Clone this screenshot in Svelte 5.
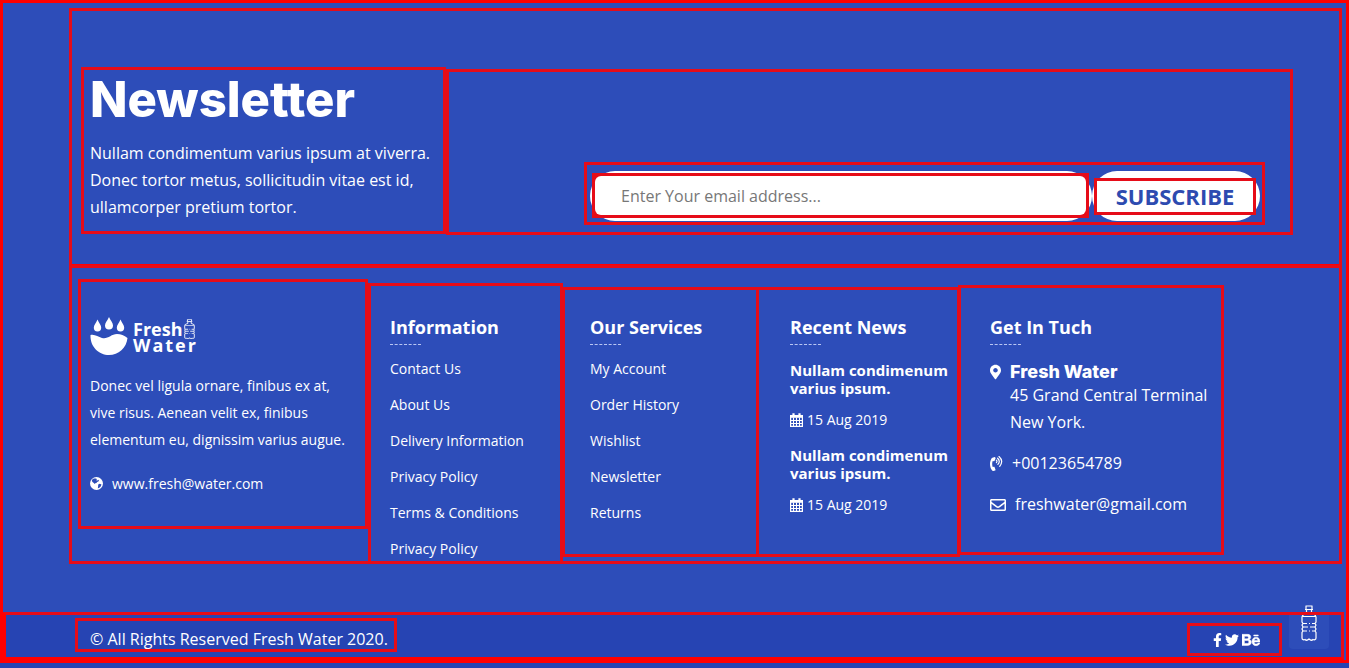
<script>
  const information = ['Contact Us', 'About Us', 'Delivery Information', 'Privacy Policy', 'Terms & Conditions', 'Privacy Policy'];
  const services = ['My Account', 'Order History', 'Wishlist', 'Newsletter', 'Returns'];
  const news = [
    { title: 'Nullam condimenum varius ipsum.', date: '15 Aug 2019' },
    { title: 'Nullam condimenum varius ipsum.', date: '15 Aug 2019' }
  ];
  let email = $state('');
</script>

{#snippet bottle(w, h, stroke)}
  <svg width={w} height={h} viewBox="0 0 16 36" preserveAspectRatio="none" fill="none" stroke="currentColor" stroke-width={stroke} aria-hidden="true">
    <path d="M4.500 1h7M5 1v3M11 1v3M4 4.500h8M5.500 4.500v3C4.500 9 1 9.500 1 12v5l1 1.500-1 1.500 1 2-1 2 1 2-1 1.500V33c0 2 2 2 3 1.500 1 1 2.500 1 4-.5 1.500 1.500 3 1.500 4 .5 1 .5 3 .5 3-1.500v-5.500l-1-1.500 1-2-1-2 1-2-1-1.500 1-1.500v-5c0-2.500-3.500-3-4.500-4.500v-3M1.500 11.500h13M2 18.500h4M8 18.500h1M11 18.500h3M2 22h5M9 22h5M2 26h4M8 26h1M11 26h3" />
  </svg>
{/snippet}

<footer class="page frame">
  <section class="newsletter frame">
    <div class="intro frame">
      <h2>Newsletter</h2>
      <p>Nullam condimentum varius ipsum at viverra. Donec tortor metus, sollicitudin vitae est id, ullamcorper pretium tortor.</p>
    </div>
    <div class="signup frame">
      <form class="frame" onsubmit={(e) => e.preventDefault()}>
        <div class="pill field">
          <div class="field-frame">
            <input type="email" aria-label="Email address" placeholder="Enter Your email address..." bind:value={email} />
          </div>
        </div>
        <button class="pill send" type="submit"><span class="frame">SUBSCRIBE</span></button>
      </form>
    </div>
  </section>

  <section class="columns frame">
    <div class="col about frame">
      <a class="logo" href="#home">
        <svg width="38" height="38" viewBox="0 0 38 38" fill="currentColor" aria-hidden="true">
          <path d="M7.500 2.500C9 6 11.200 8 11.200 10.800a3.700 3.700 0 0 1-7.400 0C3.800 8 6 6 7.500 2.500zM19 0c1.500 3.500 4 5.500 4 8.500a4 4 0 0 1-8 0C15 5.500 17.500 3.500 19 0zM30.500 2.500c1.500 3.500 3.700 5.500 3.700 8.300a3.700 3.700 0 0 1-7.400 0c0-2.800 2.200-4.800 3.700-8.300z" />
          <path d="M0.500 18C5 17 8 20 12 21c6 1.500 9-4 15-4 4 0 7 1.500 10.500 4C36.500 31 28.500 38 19 38 9 38 0 30 .5 18z" />
        </svg>
        <span class="words">
          <span class="fresh">Fresh{@render bottle(11, 20, 1.5)}</span>
          <span class="water">Water</span>
        </span>
      </a>
      <p>Donec vel ligula ornare, finibus ex at, vive risus. Aenean velit ex, finibus elementum eu, dignissim varius augue.</p>
      <a class="site" href="#site">
        <svg width="13" height="13" viewBox="0 0 13 13" aria-hidden="true">
          <circle cx="6.500" cy="6.500" r="6.500" fill="currentColor" />
          <path d="M2.500 2.300 4 1.400l2.200.1.800.9-.8.7.9.6 1-.9.900.5-.6 1.300-1.300.5-.7 1-1.200.1-.5.800-.9-1-1.300-.9-.7-1.400zM8.200 7.600l1.500-.8 1.800.6-.8 2-1.700 1.500-1.200.3.300-1.600z" fill="#2d4db9" />
        </svg>
        <span>www.fresh@water.com</span>
      </a>
    </div>

    <nav class="col info frame" aria-label="Information">
      <h3>Information</h3>
      <ul>
        {#each information as item}<li><a href="#info">{item}</a></li>{/each}
      </ul>
    </nav>

    <nav class="col services frame" aria-label="Our Services">
      <h3>Our Services</h3>
      <ul>
        {#each services as item}<li><a href="#services">{item}</a></li>{/each}
      </ul>
    </nav>

    <div class="col recent frame">
      <h3>Recent News</h3>
      {#each news as post}
        <article>
          <h4>{post.title}</h4>
          <div class="date">
            <svg width="13" height="14" viewBox="0 0 13 14" fill="none" stroke="currentColor" aria-hidden="true">
              <path d="M.6 2.500h11.800v10.900H.6z" stroke-width="1.200" />
              <path d="M0 3.500h13" stroke-width="2.600" />
              <path d="M3.500.2v3.600M9.500.2v3.600" stroke-width="2.200" />
              <path d="M3.500 4.500v9M6.500 4.500v9M9.500 4.500v9M0 7.500h13M0 10.500h13" stroke-width="1" />
            </svg>
            <time datetime="2019-08-15">{post.date}</time>
          </div>
        </article>
      {/each}
    </div>

    <div class="col contact frame">
      <h3>Get In Tuch</h3>
      <address>
        <div class="row place">
          <svg width="11" height="16" viewBox="0 0 384 512" fill="currentColor" aria-hidden="true"><path d="M172.268 501.670C26.970 291.031 0 269.413 0 192 0 85.961 85.961 0 192 0s192 85.961 192 192c0 77.413-26.970 99.031-172.268 309.670-9.535 13.774-29.930 13.773-39.464 0zM192 272c44.183 0 80-35.817 80-80s-35.817-80-80-80-80 35.817-80 80 35.817 80 80 80z" /></svg>
          <div>
            <strong>Fresh Water</strong>
            <span>45 Grand Central Terminal<br />New York.</span>
          </div>
        </div>
        <a class="row phone" href="tel:+00123654789">
          <svg width="13" height="16" viewBox="0 0 13 16" fill="none" stroke="currentColor" aria-hidden="true">
            <path d="M4.600.9 1.800 1.900C-.6 5.500-.6 10.500 1.800 14.100c.3.700.9 1.100 1.600 1l1.700-.5c.4-.1.600-.5.400-.9L4.600 11.200c-.1-.3-.4-.5-.7-.4l-1.200.2c-.7-2-.7-4 0-6l1.200.2c.3.100.6-.1.700-.4l1-2.500c.2-.4 0-.8-.4-.9z" fill="currentColor" stroke="none" />
            <path d="M6.400 4.200q1.200.9 0 2.400M7.600 2.200q3.200 3 .3 6.200M9 .5q5 4.500.7 9.800" stroke-width="1.200" stroke-linecap="round" />
          </svg>
          <span>+00123654789</span>
        </a>
        <a class="row" href="mailto:freshwater@gmail.com">
          <svg width="16" height="16" viewBox="0 0 512 512" fill="currentColor" aria-hidden="true"><path d="M464 64H48C21.490 64 0 85.490 0 112v288c0 26.510 21.490 48 48 48h416c26.510 0 48-21.490 48-48V112c0-26.510-21.490-48-48-48zm0 48v40.805c-22.422 18.259-58.168 46.651-134.587 106.490-16.841 13.247-50.201 45.072-73.413 44.701-23.208.375-56.579-31.459-73.413-44.701C106.180 199.465 70.425 171.067 48 152.805V112h416zM48 400V214.398c22.914 18.251 55.409 43.862 104.938 82.646 21.857 17.205 60.134 55.186 103.062 54.955 42.717.231 80.509-37.199 103.053-54.947 49.528-38.783 82.032-64.401 104.947-82.653V400H48z" /></svg>
          <span>freshwater@gmail.com</span>
        </a>
      </address>
    </div>
  </section>

  <div class="bar">
    <p class="frame">© All Rights Reserved Fresh Water 2020.</p>
    <div class="social frame">
      <a href="#facebook" aria-label="Facebook"><svg width="9" height="14" viewBox="0 0 320 512" fill="currentColor"><path d="M279.140 288l14.220-92.660h-88.910v-60.130c0-25.350 12.420-50.060 52.240-50.060h40.420V6.260S260.430 0 225.360 0c-73.220 0-121.080 44.380-121.080 124.720v70.620H22.890V288h81.390v224h100.170V288z" /></svg></a>
      <a href="#twitter" aria-label="Twitter"><svg width="14" height="14" viewBox="0 0 512 512" fill="currentColor"><path d="M459.370 151.716c.325 4.548.325 9.097.325 13.645 0 138.720-105.583 298.558-298.558 298.558-59.452 0-114.680-17.219-161.137-47.106 8.447.974 16.568 1.299 25.340 1.299 49.055 0 94.213-16.568 130.274-44.832-46.132-.975-84.792-31.188-98.112-72.772 6.498.974 12.995 1.624 19.818 1.624 9.421 0 18.843-1.300 27.614-3.573-48.081-9.747-84.143-51.980-84.143-102.985v-1.299c13.969 7.797 30.214 12.670 47.431 13.319-28.264-18.843-46.781-51.005-46.781-87.391 0-19.492 5.197-37.360 14.294-52.954 51.655 63.675 129.300 105.258 216.365 109.807-1.624-7.797-2.599-15.918-2.599-24.040 0-57.828 46.782-104.934 104.934-104.934 30.213 0 57.502 12.670 76.670 33.137 23.715-4.548 46.456-13.320 66.599-25.340-7.798 24.366-24.366 44.833-46.132 57.827 21.117-2.273 41.584-8.122 60.426-16.243-14.292 20.791-32.161 39.308-52.628 54.253z" /></svg></a>
      <a href="#behance" aria-label="Behance"><svg width="18" height="16" viewBox="0 0 576 512" fill="currentColor" stroke="currentColor" stroke-width="16"><path d="M232 237.200c31.800-15.200 48.400-38.200 48.400-74 0-70.600-52.600-87.800-113.300-87.800H0v354.400h171.800c64.400 0 124.900-30.900 124.900-102.900 0-44.500-21.100-77.400-64.700-89.700zM77.900 135.900H151c28.100 0 53.400 7.900 53.400 40.500 0 30.100-19.700 42.200-47.500 42.200h-79v-82.700zm83.300 233.700H77.900V272h84.900c34.300 0 56 14.300 56 50.600 0 35.800-25.900 47-57.600 47zm358.500-240.700H376V94h143.700v34.900zM576 305.200c0-75.900-44.400-139.200-124.900-139.200-78.200 0-131.300 58.800-131.300 135.800 0 79.900 50.300 134.700 131.300 134.700 61.300 0 101-27.600 120.100-86.300H509c-6.700 21.900-34.300 33.500-55.700 33.500-41.300 0-63-24.200-63-65.300h185.100c.3-4.200.6-8.700.6-13.200zM390.400 274c2.300-33.700 24.700-54.800 58.500-54.800 35.400 0 53.200 20.800 56.200 54.800H390.400z" /></svg></a>
    </div>
    <a class="top" href="#top" aria-label="Back to top">{@render bottle(16, 36, 1.2)}</a>
  </div>
</footer>

<style>
  :global(body) {
    background: #2644b1;
    color: #fff;
    font: 16px/27px "Open Sans", sans-serif;
  }
  .page, .page * { box-sizing: border-box; }
  .page p, .page h2, .page h3, .page h4, .page ul { margin: 0; padding: 0; }
  .page a { color: inherit; text-decoration: none; }
  svg { display: block; flex: none; }
  .frame { border: 3px solid #e60c18; }

  .page {
    background: #2d4db9;
    border-color: #f00;
    padding-top: 5px;
  }
  .newsletter, .columns {
    display: flex;
    align-items: flex-start;
    margin: 0 4px 0 66px;
  }
  .newsletter {
    padding: 56px 46px 30px 9px;
    border-bottom-color: #f00;
  }
  .intro { width: 365px; flex: none; padding: 0 6px 10px; }
  h2 {
    font: 800 49px/60px Inter, sans-serif;
    margin-bottom: 10px !important;
  }
  .signup {
    flex: 1;
    display: flex;
    align-self: stretch;
    align-items: flex-end;
    margin-top: 2px;
    margin-bottom: -1px;
    padding: 0 25px 7px 135px;
  }
  form { flex: 1; display: flex; padding: 6px 2px 1px 3px; }
  .pill { background: #fff; height: 50px; border: 0; border-radius: 25px; }
  .field { flex: 1; padding: 2px 3px 3px 2px; }
  .field-frame { height: 45px; padding: 3px; background: #e60c18; }
  input {
    display: block;
    width: 100%;
    height: 100%;
    border: 0;
    border-radius: 6px;
    padding: 0 26px;
    background: #fff;
    color: #333;
    font: inherit;
    outline: none;
  }
  input::placeholder { color: #777; opacity: 1; }
  .send { flex: none; padding: 0 4px 0 2px; cursor: pointer; }
  .send span {
    display: block;
    width: 162px;
    background: #fff;
    color: #2d4bb0;
    font: 700 22px/31px "Open Sans", sans-serif;
  }

  .columns {
    margin-top: -2px;
    padding: 11px 115px 0 6px;
  }
  .col { flex: none; font-size: 14px; }
  .about { width: 290px; height: 250px; padding: 35px 8px 0 9px; }
  .about p { margin-top: 17px; padding-right: 8px; }
  .info { width: 195px; margin: 4px 0 -3px; padding: 29px 0 2px 19px; }
  .services { width: 197px; height: 270px; margin: 8px 0 0 -1px; padding: 25px 0 0 25px; }
  .recent { width: 204px; height: 270px; margin: 8px 0 0 -3px; padding: 25px 2px 0 31px; }
  .contact { width: 266px; height: 270px; margin: 6px 0 0 -2px; padding: 27px 0 0 29px; }

  .logo { display: flex; gap: 5px; height: 38px; }
  .words { display: flex; flex-direction: column; padding-top: 4px; font: 700 18px/16px "Open Sans", sans-serif; }
  .fresh { display: flex; gap: 2px; height: 16px; }
  .fresh :global(svg) { opacity: .85; margin-top: -2px; }
  .water { letter-spacing: 2px; }
  .site { display: flex; align-items: center; gap: 9px; margin-top: 17px; }

  h3 { font: 700 18px/24px "Open Sans", sans-serif; }
  h3::after {
    content: "";
    display: block;
    width: 31px;
    margin-top: 5px;
    border-top: 1px dashed #b9c6f3;
  }
  ul { list-style: none; display: grid; gap: 16px; padding-top: 14px !important; line-height: 20px; }

  article { padding-top: 16px; }
  h4 { font: 700 15px/18px "Open Sans", sans-serif; }
  .date { display: flex; align-items: center; gap: 4px; margin-top: 13px; line-height: 20px; }

  address { font: 16px/27px "Open Sans", sans-serif; padding-top: 17px; display: grid; gap: 14px; }
  .row { display: flex; align-items: center; gap: 9px; }
  .place { align-items: flex-start; }
  .place svg { margin-top: 2px; }
  strong { display: block; font: 800 18px/20px Inter, sans-serif; }

  .bar {
    position: relative;
    display: flex;
    align-items: flex-start;
    justify-content: space-between;
    height: 48px;
    margin: 48px 2px 0 0;
    padding: 6px 62px 0 72px;
    background: #2644b3;
  }
  .bar::after {
    content: "";
    position: absolute;
    inset: 0;
    border: 3px solid #e60c18;
    border-left-color: #f00;
    border-bottom-color: #f00;
    pointer-events: none;
  }
  .bar p { height: 34px; padding: 5px 6px 0 12px; overflow: hidden; }
  .social { display: flex; align-items: center; gap: 3px; width: 95px; height: 33px; margin-top: 5px; padding-left: 23px; }
  .top {
    position: absolute;
    right: 15px;
    bottom: 11px;
    width: 40px;
    height: 40px;
    display: flex;
    justify-content: center;
    align-items: flex-end;
    padding-bottom: 8px;
    border-radius: 4px;
    background: #2d4db9;
  }
</style>
